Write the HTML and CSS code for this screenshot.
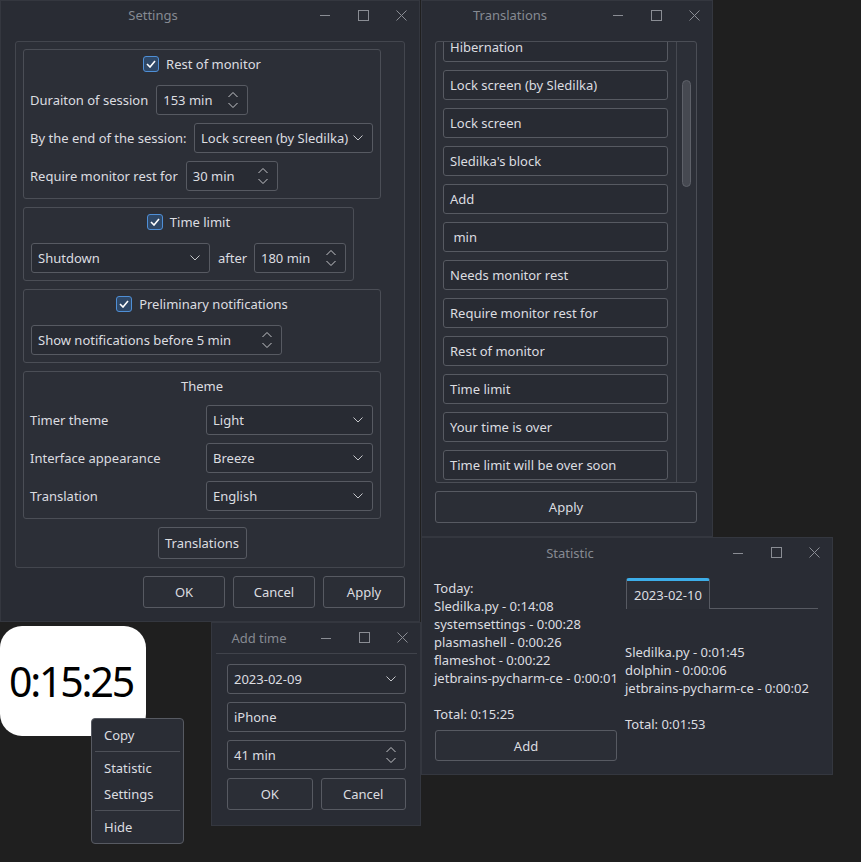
FILE: index.html
```html
<!DOCTYPE html>
<html>
<head>
<meta charset="utf-8">
<link rel="stylesheet" href="styles.css">
</head>
<body>

<div class="win settings">
  <div class="titlebar">
    <div class="title">Settings</div>
    <div class="wbtns">
      <div class="wbtn"><svg width="10" height="10" viewBox="0 0 10 10"><path d="M0 5.5H10" stroke="#8a8d94" stroke-width="1"/></svg></div>
      <div class="wbtn"><svg width="11" height="11" viewBox="0 0 11 11"><rect x="0.5" y="0.5" width="10" height="10" fill="none" stroke="#8a8d94"/></svg></div>
      <div class="wbtn"><svg width="11" height="11" viewBox="0 0 11 11"><path d="M0.5 0.5L10.5 10.5M10.5 0.5L0.5 10.5" stroke="#8a8d94"/></svg></div>
    </div>
  </div>
  <div class="sbody">
    <div class="frame">
      <div class="col">
        <div class="group wide">
          <div class="ghead"><span class="cb"><svg width="10" height="8" viewBox="0 0 10 8"><path d="M1 4L4 7L9 1" fill="none" stroke="#fff" stroke-width="1.6"/></svg></span><span>Rest of monitor</span></div>
          <div class="rows">
            <div class="row"><span class="lbl">Duraiton of session</span><div class="field w92">153 min<svg class="spinarr" width="10" height="16" viewBox="0 0 10 16"><path d="M0.5 5L5 0.5L9.5 5M0.5 11L5 15.5L9.5 11" fill="none" stroke="#c4c6ca"/></svg></div></div>
            <div class="row"><span class="lbl">By the end of the session:</span><div class="field w179 push">Lock screen (by Sledilka)<svg class="chev" width="10" height="6" viewBox="0 0 10 6"><path d="M0.5 0.5L5 5L9.5 0.5" fill="none" stroke="#c4c6ca"/></svg></div></div>
            <div class="row"><span class="lbl">Require monitor rest for</span><div class="field w92">30 min<svg class="spinarr" width="10" height="16" viewBox="0 0 10 16"><path d="M0.5 5L5 0.5L9.5 5M0.5 11L5 15.5L9.5 11" fill="none" stroke="#c4c6ca"/></svg></div></div>
          </div>
        </div>

        <div class="group">
          <div class="ghead"><span class="cb"><svg width="10" height="8" viewBox="0 0 10 8"><path d="M1 4L4 7L9 1" fill="none" stroke="#fff" stroke-width="1.6"/></svg></span><span>Time limit</span></div>
          <div class="rows">
            <div class="row"><div class="field w179">Shutdown<svg class="chev" width="10" height="6" viewBox="0 0 10 6"><path d="M0.5 0.5L5 5L9.5 0.5" fill="none" stroke="#c4c6ca"/></svg></div><span class="after">after</span><div class="field w92">180 min<svg class="spinarr" width="10" height="16" viewBox="0 0 10 16"><path d="M0.5 5L5 0.5L9.5 5M0.5 11L5 15.5L9.5 11" fill="none" stroke="#c4c6ca"/></svg></div></div>
          </div>
        </div>

        <div class="group wide">
          <div class="ghead"><span class="cb"><svg width="10" height="8" viewBox="0 0 10 8"><path d="M1 4L4 7L9 1" fill="none" stroke="#fff" stroke-width="1.6"/></svg></span><span>Preliminary notifications</span></div>
          <div class="rows">
            <div class="row"><div class="field w251">Show notifications before 5 min<svg class="spinarr" width="10" height="16" viewBox="0 0 10 16"><path d="M0.5 5L5 0.5L9.5 5M0.5 11L5 15.5L9.5 11" fill="none" stroke="#c4c6ca"/></svg></div></div>
          </div>
        </div>

        <div class="group wide">
          <div class="ghead theme">Theme</div>
          <div class="rows">
            <div class="row"><span class="lbl">Timer theme</span><div class="field w167 push">Light<svg class="chev" width="10" height="6" viewBox="0 0 10 6"><path d="M0.5 0.5L5 5L9.5 0.5" fill="none" stroke="#c4c6ca"/></svg></div></div>
            <div class="row"><span class="lbl">Interface appearance</span><div class="field w167 push">Breeze<svg class="chev" width="10" height="6" viewBox="0 0 10 6"><path d="M0.5 0.5L5 5L9.5 0.5" fill="none" stroke="#c4c6ca"/></svg></div></div>
            <div class="row"><span class="lbl">Translation</span><div class="field w167 push">English<svg class="chev" width="10" height="6" viewBox="0 0 10 6"><path d="M0.5 0.5L5 5L9.5 0.5" fill="none" stroke="#c4c6ca"/></svg></div></div>
          </div>
        </div>

        <div class="btn trbtn">Translations</div>
      </div>
    </div>
    <div class="dlgbtns">
      <div class="btn b82">OK</div>
      <div class="btn b82">Cancel</div>
      <div class="btn b82">Apply</div>
    </div>
  </div>
</div>

<div class="win translations">
  <div class="titlebar">
    <div class="title">Translations</div>
    <div class="wbtns">
      <div class="wbtn"><svg width="10" height="10" viewBox="0 0 10 10"><path d="M0 5.5H10" stroke="#8a8d94" stroke-width="1"/></svg></div>
      <div class="wbtn"><svg width="11" height="11" viewBox="0 0 11 11"><rect x="0.5" y="0.5" width="10" height="10" fill="none" stroke="#8a8d94"/></svg></div>
      <div class="wbtn"><svg width="11" height="11" viewBox="0 0 11 11"><path d="M0.5 0.5L10.5 10.5M10.5 0.5L0.5 10.5" stroke="#8a8d94"/></svg></div>
    </div>
  </div>
  <div class="tbody">
    <div class="list">
      <div class="items">
        <div class="items-inner">
          <div class="field item">Hibernation</div>
          <div class="field item">Lock screen (by Sledilka)</div>
          <div class="field item">Lock screen</div>
          <div class="field item">Sledilka's block</div>
          <div class="field item">Add</div>
          <div class="field item">&nbsp;min</div>
          <div class="field item">Needs monitor rest</div>
          <div class="field item">Require monitor rest for</div>
          <div class="field item">Rest of monitor</div>
          <div class="field item">Time limit</div>
          <div class="field item">Your time is over</div>
          <div class="field item">Time limit will be over soon</div>
        </div>
      </div>
      <div class="sbar"><div class="handle"></div></div>
    </div>
    <div class="btn wapply">Apply</div>
  </div>
</div>

<div class="win statistic">
  <div class="titlebar">
    <div class="title">Statistic</div>
    <div class="wbtns">
      <div class="wbtn"><svg width="10" height="10" viewBox="0 0 10 10"><path d="M0 5.5H10" stroke="#8a8d94" stroke-width="1"/></svg></div>
      <div class="wbtn"><svg width="11" height="11" viewBox="0 0 11 11"><rect x="0.5" y="0.5" width="10" height="10" fill="none" stroke="#8a8d94"/></svg></div>
      <div class="wbtn"><svg width="11" height="11" viewBox="0 0 11 11"><path d="M0.5 0.5L10.5 10.5M10.5 0.5L0.5 10.5" stroke="#8a8d94"/></svg></div>
    </div>
  </div>
  <div class="stbody">
    <div class="stleft">
      <div class="ln">Today:</div>
      <div class="ln">Sledilka.py - 0:14:08</div>
      <div class="ln">systemsettings - 0:00:28</div>
      <div class="ln">plasmashell - 0:00:26</div>
      <div class="ln">flameshot - 0:00:22</div>
      <div class="ln">jetbrains-pycharm-ce - 0:00:01</div>
      <div class="ln"></div>
      <div class="ln">Total: 0:15:25</div>
      <div class="btn addbtn">Add</div>
    </div>
    <div class="stright">
      <div class="tabbar"><div class="tab">2023-02-10</div><div class="tabfill"></div></div>
      <div class="tabpage">
        <div class="ln">Sledilka.py - 0:01:45</div>
        <div class="ln">dolphin - 0:00:06</div>
        <div class="ln">jetbrains-pycharm-ce - 0:00:02</div>
        <div class="ln"></div>
        <div class="ln">Total: 0:01:53</div>
      </div>
    </div>
  </div>
</div>

<div class="win addtime">
  <div class="titlebar">
    <div class="title">Add time</div>
    <div class="wbtns">
      <div class="wbtn"><svg width="10" height="10" viewBox="0 0 10 10"><path d="M0 5.5H10" stroke="#8a8d94" stroke-width="1"/></svg></div>
      <div class="wbtn"><svg width="11" height="11" viewBox="0 0 11 11"><rect x="0.5" y="0.5" width="10" height="10" fill="none" stroke="#8a8d94"/></svg></div>
      <div class="wbtn"><svg width="11" height="11" viewBox="0 0 11 11"><path d="M0.5 0.5L10.5 10.5M10.5 0.5L0.5 10.5" stroke="#8a8d94"/></svg></div>
    </div>
  </div>
  <div class="tsep"></div>
  <div class="abody">
    <div class="field">2023-02-09<svg class="chev" width="10" height="6" viewBox="0 0 10 6"><path d="M0.5 0.5L5 5L9.5 0.5" fill="none" stroke="#c4c6ca"/></svg></div>
    <div class="field">iPhone</div>
    <div class="field">41 min<svg class="spinarr" width="10" height="16" viewBox="0 0 10 16"><path d="M0.5 5L5 0.5L9.5 5M0.5 11L5 15.5L9.5 11" fill="none" stroke="#c4c6ca"/></svg></div>
    <div class="abtns"><div class="btn">OK</div><div class="btn">Cancel</div></div>
  </div>
</div>

<div class="timer">0:15:25</div>

<div class="menu">
  <div class="mi">Copy</div>
  <div class="msep"></div>
  <div class="mi">Statistic</div>
  <div class="mi">Settings</div>
  <div class="msep"></div>
  <div class="mi">Hide</div>
</div>

</body>
</html>
```
FILE: styles.css
```css
* { box-sizing: border-box; }
html, body { margin: 0; padding: 0; }
body {
  background: #1f1f1f;
  width: 861px;
  height: 862px;
  overflow: hidden;
  position: relative;
  font-family: "Noto Sans", "DejaVu Sans", sans-serif;
  font-size: 13px;
  color: #dcdde0;
}

/* windows on the desktop */
.win {
  position: absolute;
  background: #292c34;
  box-shadow: inset 0 0 0 1px #34373f;
  display: flex;
  flex-direction: column;
}
.settings { left: 0; top: 0; width: 420px; height: 622px; }
.translations { left: 421px; top: 0; width: 292px; height: 537px; }
.statistic { left: 421px; top: 537px; width: 412px; height: 238px; }
.addtime { left: 211px; top: 622px; width: 210px; height: 204px; }

.titlebar { height: 30px; display: flex; align-items: center; flex: none; }
.statistic .titlebar { height: 31px; }
.addtime .titlebar { height: 31px; }
.title { flex: 1; text-align: center; color: #868a92; }
.wbtns { display: flex; }
.wbtn { width: 38px; height: 30px; display: flex; align-items: center; justify-content: center; }
.tsep { height: 1px; background: #40434b; margin: 0 4px 0 5px; flex: none; }

/* generic widgets */
.field {
  height: 30px;
  border: 1px solid #575a62;
  border-radius: 3px;
  background: #282b33;
  display: flex;
  align-items: center;
  padding: 0 9px 0 6px;
  white-space: nowrap;
  flex: none;
}
.field .chev, .field .spinarr { margin-left: auto; flex: none; }
.btn {
  height: 32px;
  border: 1px solid #575a62;
  border-radius: 3px;
  background: #2b2e36;
  display: flex;
  align-items: center;
  justify-content: center;
  white-space: nowrap;
}
.cb {
  width: 16px; height: 16px;
  border: 1px solid #4f8fd6;
  border-radius: 3px;
  background: #2f4867;
  display: flex; align-items: center; justify-content: center;
  flex: none;
}

/* settings */
.sbody { padding: 11px 15px 0; display: flex; flex-direction: column; }
.frame {
  width: 390px;
  border: 1px solid #43464e;
  border-radius: 3px;
  background: #2c2f37;
  padding: 7px 7px 8px;
}
.col { width: 358px; display: flex; flex-direction: column; align-items: flex-start; gap: 8px; }
.group {
  border: 1px solid #4b4e56;
  border-radius: 3px;
  padding: 6px 7px 7px;
}
.group.wide { width: 358px; }
.ghead {
  height: 16px;
  margin-bottom: 13px;
  display: flex; align-items: center; justify-content: center;
  gap: 7px;
}
.ghead.theme { margin-bottom: 11px; }
.rows { display: flex; flex-direction: column; gap: 8px; }
.row { display: flex; align-items: center; gap: 8px; white-space: nowrap; }
.lbl { margin-left: -1px; min-width: 0; flex-shrink: 1; }
.push { margin-left: auto; }
.w92 { width: 92px; }
.w167 { width: 167px; }
.w179 { width: 179px; }
.w251 { width: 251px; }
.after { width: 28px; }
.trbtn { width: 89px; align-self: center; }
.dlgbtns { display: flex; justify-content: flex-end; gap: 8px; margin-top: 8px; }
.b82 { width: 82px; }

/* translations */
.tbody { padding: 11px 16px 0 14px; display: flex; flex-direction: column; }
.list {
  width: 262px; height: 442px;
  border: 1px solid #4b4e56;
  border-radius: 3px;
  background: #2c2f37;
  display: flex;
  overflow: hidden;
}
.items { flex: 1; overflow: hidden; padding: 0 8px 0 7px; }
.items-inner { margin-top: -10px; display: flex; flex-direction: column; gap: 8px; }
.item { width: 225px; }
.sbar { width: 20px; border-left: 1px solid #464951; flex: none; }
.handle {
  width: 9px; height: 107px;
  margin: 38px 0 0 5px;
  border: 1px solid #5e6169;
  border-radius: 5px;
  background: #464951;
}
.wapply { margin-top: 8px; width: 262px; }

/* statistic */
.stbody { display: flex; padding: 10px 0 0 13px; gap: 8px; }
.stleft { width: 183px; padding-top: 1px; }
.ln { height: 18px; line-height: 18px; white-space: nowrap; }
.addbtn { height: 31px; margin: 7px 0 0 1px; width: 182px; }
.stright { width: 193px; }
.tabbar { display: flex; height: 31px; }
.tab {
  width: 84px; height: 31px;
  margin-left: 1px;
  border-top: 3px solid #3daee9;
  border-left: 1px solid #575a62;
  border-right: 1px solid #575a62;
  border-radius: 3px 3px 0 0;
  padding-left: 7px;
  display: flex; align-items: center;
  background: #2b2e36;
}
.tabfill { flex: 1; border-bottom: 1px solid #575a62; }
.tabpage { padding-top: 34px; }

/* add time */
.abody { padding: 10px 15px 0 16px; display: flex; flex-direction: column; gap: 8px; }
.abtns { display: flex; gap: 8px; }
.abtns .btn { flex: 1; }

/* floating timer + context menu */
.timer {
  position: absolute;
  left: 0; top: 626px;
  width: 146px; height: 110px;
  background: #ffffff;
  border-radius: 22px;
  color: #000;
  font-size: 41px;
  letter-spacing: -2.2px;
  display: flex; align-items: center; justify-content: center;
  padding-right: 4px;
}
.menu {
  position: absolute;
  left: 91px; top: 718px;
  width: 93px; height: 126px;
  background: #2a2d35;
  border: 1px solid #575a62;
  border-radius: 4px;
  padding: 3px 0;
}
.mi { height: 26px; line-height: 26px; padding-left: 12px; }
.msep { height: 1px; background: #4d5058; margin: 3px 3px; }
```
